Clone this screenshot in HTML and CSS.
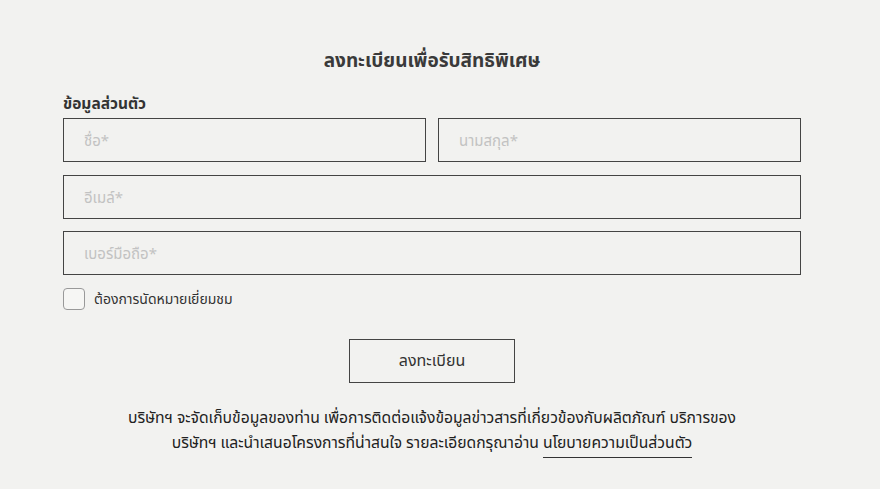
FILE: index.html
```html
<!DOCTYPE html>
<html lang="th">
<head>
<meta charset="utf-8">
<link rel="stylesheet" href="styles.css">
</head>
<body>
<div class="page">
  <form class="form">
    <h1 class="title">ลงทะเบียนเพื่อรับสิทธิพิเศษ</h1>
    <div class="label">ข้อมูลส่วนตัว</div>
    <div class="row two">
      <input class="field" placeholder="ชื่อ*">
      <input class="field" placeholder="นามสกุล*">
    </div>
    <div class="row">
      <input class="field" placeholder="อีเมล์*">
    </div>
    <div class="row">
      <input class="field" placeholder="เบอร์มือถือ*">
    </div>
    <label class="check">
      <span class="box"></span>
      <span class="check-text">ต้องการนัดหมายเยี่ยมชม</span>
    </label>
    <div class="actions">
      <button type="button" class="btn">ลงทะเบียน</button>
    </div>
    <p class="note">บริษัทฯ จะจัดเก็บข้อมูลของท่าน เพื่อการติดต่อแจ้งข้อมูลข่าวสารที่เกี่ยวข้องกับผลิตภัณฑ์ บริการของ<br>บริษัทฯ และนำเสนอโครงการที่น่าสนใจ รายละเอียดกรุณาอ่าน <a class="link" href="#">นโยบายความเป็นส่วนตัว</a></p>
  </form>
</div>
</body>
</html>
```
FILE: styles.css
```css
* { box-sizing: border-box; }
html, body { margin: 0; padding: 0; }
body {
  background: #f2f2f0;
  font-family: "Noto Sans", "Noto Sans Thai", "DejaVu Sans", sans-serif;
  color: #333;
}
.page {
  width: 880px;
  height: 489px;
  padding: 45px 0 0 63px;
}
.form {
  width: 738px;
}
.title {
  margin: 0;
  text-align: center;
  font-size: 19px;
  font-weight: 700;
  color: #3a3a3a;
  line-height: 30px;
}
.label {
  margin-top: 17px;
  font-size: 15.5px;
  font-weight: 700;
  color: #333;
  line-height: 22px;
}
.row {
  display: flex;
  gap: 12px;
  margin-top: 13px;
}
.label + .row { margin-top: 4px; }
.row + .row + .row { margin-top: 12px; }
.field {
  flex: 1;
  min-width: 0;
  height: 44px;
  border: 1px solid #444;
  background: transparent;
  padding: 0 20px;
  font-family: inherit;
  font-size: 15px;
  color: #333;
  outline: none;
}
.field::placeholder { color: #c2c2c2; }
.check {
  display: flex;
  align-items: center;
  gap: 9px;
  margin-top: 13px;
}
.box {
  width: 22px;
  height: 22px;
  border: 1px solid #999;
  border-radius: 4px;
  background: #f6f6f4;
}
.check-text {
  font-size: 14px;
  color: #333;
}
.actions {
  display: flex;
  justify-content: center;
  margin-top: 29px;
}
.btn {
  width: 166px;
  height: 44px;
  border: 1px solid #444;
  background: transparent;
  font-family: inherit;
  font-size: 16px;
  color: #333;
}
.note {
  margin: 22px 0 0;
  text-align: center;
  font-size: 15.7px;
  line-height: 25px;
  color: #222;
}
.link {
  color: #222;
  text-decoration: none;
  border-bottom: 1px solid #333;
  padding-bottom: 4px;
}
```
